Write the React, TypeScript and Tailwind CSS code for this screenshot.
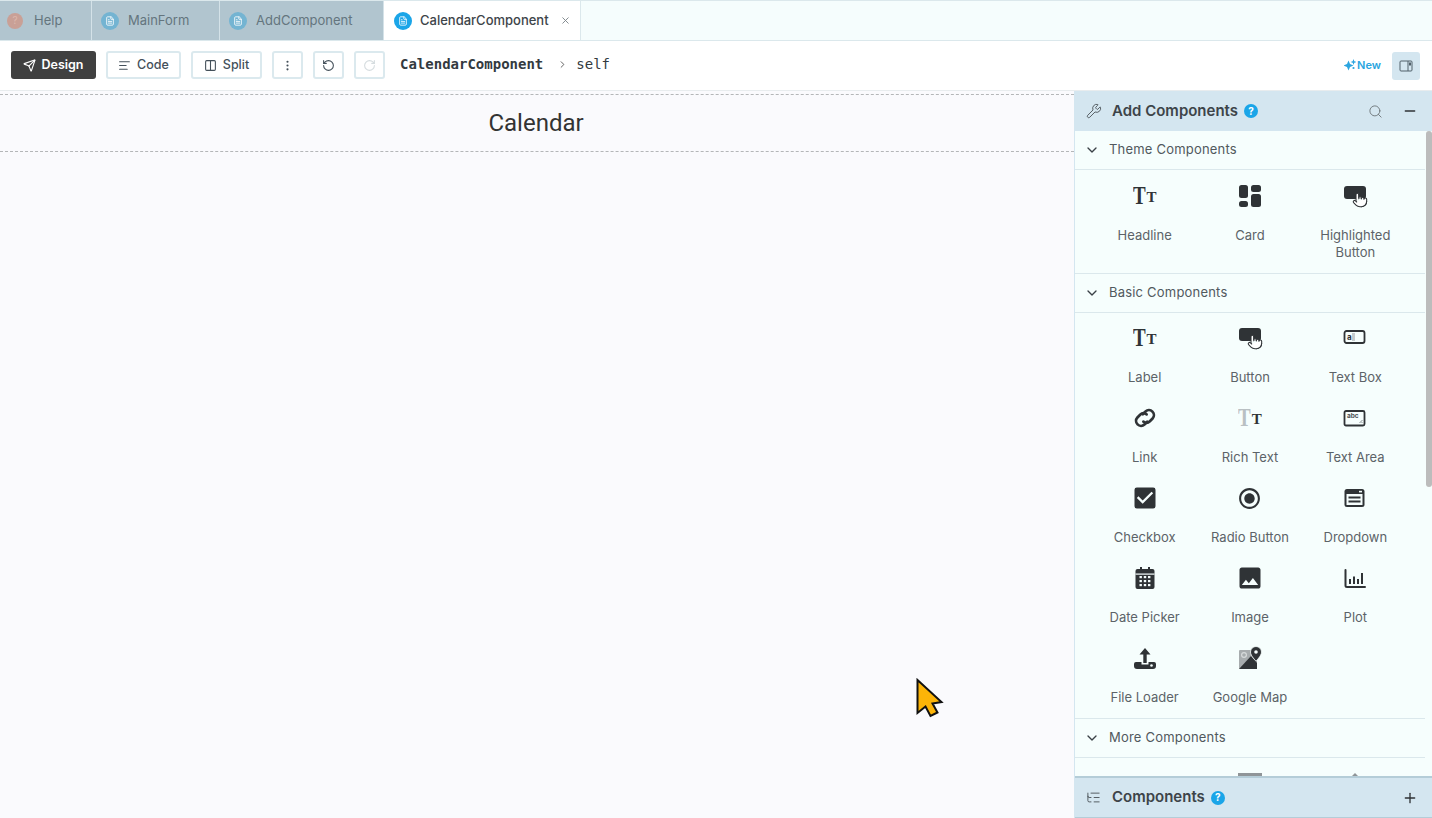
import React from 'react';
import { ChevronDown, ChevronRight, Search, Minus, Plus, Wrench, Send, AlignLeft, Columns2, EllipsisVertical, RotateCcw, RotateCw, X, ListTree, FileText, Pointer } from 'lucide-react';
import { MdCheckBox, MdRadioButtonChecked, MdImage } from 'react-icons/md';

const ui = { fontFamily: 'Inter, "Liberation Sans", sans-serif' };

function Help() {
  return (
    <span className="flex h-[14px] w-[14px] items-center justify-center rounded-full bg-[#1aa5e8] text-[10px] font-bold text-white">?</span>
  );
}

function TabIcon({ color }: { color: string }) {
  return (
    <span className={`flex h-[18px] w-[18px] shrink-0 items-center justify-center rounded-full ${color}`}>
      <FileText size={10} className="text-white" />
    </span>
  );
}

function Tab({ label, width }: { label: string; width: string }) {
  return (
    <div className={`flex h-full items-center gap-[9px] border-r border-[#d4e2e8] pl-[9px] ${width}`}>
      <TabIcon color="bg-[#74b4d2]" />
      <span className="text-[13px] text-[#64757e]">{label}</span>
    </div>
  );
}

function ToolButton({ children, width }: { children: React.ReactNode; width: string }) {
  return (
    <button className={`flex h-[28px] items-center justify-center gap-[6px] rounded-[3px] border-2 border-[#dbe9ee] bg-white text-[12.5px] font-medium text-[#44505a] ${width}`}>
      {children}
    </button>
  );
}

function TtIcon({ faded }: { faded?: boolean }) {
  return (
    <span className="flex h-[24px] items-end justify-center text-[#2f3336]" style={{ fontFamily: '"Liberation Serif", serif' }}>
      <span className={`-mx-[2px] inline-block scale-x-[0.76] text-[25px] leading-[24px] font-bold ${faded ? 'text-[#b9c0c3]' : ''}`}>T</span>
      <span className="mb-[3px] ml-[1px] text-[15px] leading-[15px] font-bold">T</span>
    </span>
  );
}

function CardIcon() {
  return (
    <svg width="24" height="24" viewBox="0 0 24 24" fill="#2f3336">
      <rect x="1" y="1" width="9" height="13" rx="2.5" />
      <rect x="13" y="1" width="10" height="7" rx="2.5" />
      <rect x="1" y="17" width="9" height="6" rx="2.5" />
      <rect x="13" y="10" width="10" height="13" rx="2.5" />
    </svg>
  );
}

function ButtonIcon() {
  return (
    <span className="relative block h-[24px] w-[24px]">
      <span className="absolute top-[2px] left-[1px] h-[13px] w-[22px] rounded-[3px] bg-[#2f3336]" />
      <Pointer size={16} strokeWidth={1.6} className="absolute top-[8px] left-[9px] fill-white text-[#2f3336]" />
    </span>
  );
}

function TextBoxIcon() {
  return (
    <svg width="24" height="24" viewBox="0 0 24 24" fill="none">
      <rect x="1.5" y="5" width="20" height="12" rx="2" stroke="#2f3336" strokeWidth="1.8" />
      <rect x="9" y="7" width="3" height="8" fill="#c5cbce" />
      <text x="4" y="14" fontSize="8" fontWeight="700" fill="#2f3336" fontFamily="Inter, sans-serif">a</text>
    </svg>
  );
}

function LinkIcon() {
  return (
    <svg className="shrink-0" width="26" height="26" viewBox="0 0 24 24" fill="none" stroke="#2f3336" strokeWidth="2.5" strokeLinecap="round">
      <path d="M10 8.5 L12.5 6 a4.6 4.6 0 0 1 6.5 6.5 L16.5 15 a4.6 4.6 0 0 1 -6 .4" />
      <path d="M14 15.5 L11.5 18 a4.6 4.6 0 0 1 -6.5 -6.5 L7.5 9 a4.6 4.6 0 0 1 6 -.4" />
    </svg>
  );
}

function TextAreaIcon() {
  return (
    <svg width="24" height="24" viewBox="0 0 24 24" fill="none">
      <rect x="1.5" y="5" width="20" height="14.5" rx="1.5" stroke="#2f3336" strokeWidth="1.8" />
      <text x="4" y="12" fontSize="6.5" fontWeight="700" fill="#4b5053" fontFamily="Inter, sans-serif">abc</text>
      <path d="M19.5 14 L16.5 17 M19.5 16 L18.5 17" stroke="#6a7073" strokeWidth="0.8" />
    </svg>
  );
}

function DropdownIcon() {
  return (
    <svg width="24" height="24" viewBox="0 0 24 24">
      <rect x="1.5" y="3" width="20" height="18" rx="2.5" fill="#2f3336" />
      <rect x="3.5" y="8" width="16" height="11" fill="#f6fefd" />
      <rect x="16" y="4.8" width="3" height="1.6" fill="#f6fefd" />
      <rect x="5.5" y="10.5" width="12" height="2" fill="#2f3336" />
      <rect x="5.5" y="14.5" width="12" height="2" fill="#2f3336" />
    </svg>
  );
}

function CalendarIcon() {
  return (
    <svg width="24" height="24" viewBox="0 0 24 24" fill="#2f3336">
      <rect x="7" y="1" width="2" height="4" />
      <rect x="15" y="1" width="2" height="4" />
      <rect x="2.5" y="3" width="19" height="20" rx="2" />
      <rect x="2.5" y="7.5" width="19" height="1.2" fill="#f6fefd" />
      {[6.5, 10.8, 15].map((x) =>
        [11, 15, 19].map((y) => <rect key={`${x}-${y}`} x={x} y={y - 1} width="2.4" height="2.2" fill="#f6fefd" />)
      )}
    </svg>
  );
}

function PlotIcon() {
  return (
    <svg width="24" height="24" viewBox="0 0 24 24" fill="none" stroke="#2f3336">
      <path d="M2.5 4 V19.5 a1.5 1.5 0 0 0 1.5 1.5 H22" strokeWidth="2" strokeLinecap="round" />
      <path d="M7 13v5M11 10.5v7.5M15 13v5M19 7v11" strokeWidth="2" />
    </svg>
  );
}

function LoaderIcon() {
  return (
    <svg width="24" height="24" viewBox="0 0 24 24">
      <path d="M12 2 L17.5 8.5 H13.7 V17 H10.3 V8.5 H6.5 Z" fill="#2f3336" />
      <path d="M3 16 H8.5 V18.5 H15.5 V16 H21 a2 2 0 0 1 2 2 V20 a3 3 0 0 1 -3 3 H4 a3 3 0 0 1 -3 -3 V18 a2 2 0 0 1 2 -2 Z" fill="#2f3336" />
      <circle cx="18.5" cy="19.5" r="1.3" fill="#f6fefd" />
    </svg>
  );
}

function MapIcon() {
  return (
    <svg width="24" height="24" viewBox="0 0 24 24">
      <rect x="1" y="4" width="18" height="19" rx="1" fill="#a7acae" />
      <path d="M1 23 L13 10 L19 17 V23 Z" fill="#2f3336" />
      <circle cx="6" cy="9" r="2.4" fill="none" stroke="#d6dadb" strokeWidth="1.2" />
      <path d="M18 0.5 a5.5 5.5 0 0 1 5.5 5.5 C23.5 10 18 15 18 15 S12.5 10 12.5 6 A5.5 5.5 0 0 1 18 0.5 Z" fill="#2f3336" stroke="#f6fefd" strokeWidth="0.8" />
      <circle cx="18" cy="6" r="1.8" fill="#f6fefd" />
    </svg>
  );
}

function Item({ icon, label }: { icon: React.ReactNode; label: string }) {
  return (
    <div className="flex h-[80px] flex-col items-center pt-[14px]">
      <div className="flex h-[24px] w-[24px] items-center justify-center">{icon}</div>
      <div className="mt-[19px] text-center text-[13px] leading-[17px] text-[#5c6368]">{label}</div>
    </div>
  );
}

function SectionHead({ label }: { label: string }) {
  return (
    <div className="flex h-[39px] items-center border-b border-[#dbe8ec] pl-[9px]">
      <ChevronDown size={16} className="text-[#3a4146]" />
      <span className="ml-[9px] text-[13px] tracking-[0.2px] text-[#51595e]">{label}</span>
    </div>
  );
}

export default function App() {
  return (
    <div className="relative flex h-[818px] w-[1432px] flex-col overflow-hidden bg-white" style={ui}>
      {/* tabs */}
      <div className="flex h-[41px] shrink-0 border-t border-b border-[#dbe8ec] bg-[#f5fdfd]">
        <div className="flex bg-[#b1c5cf]">
          <div className="flex h-full w-[92px] items-center gap-[11px] border-r border-[#d4e2e8] pl-[7px]">
            <span className="flex h-[16px] w-[16px] items-center justify-center rounded-full bg-[#c9a096] text-[10px] text-[#dcb8ae]">?</span>
            <span className="text-[13px] text-[#64757e]">Help</span>
          </div>
          <Tab label="MainForm" width="w-[128px]" />
          <Tab label="AddComponent" width="w-[164px]" />
        </div>
        <div className="flex w-[197px] items-center border-r border-[#dbe8ec] bg-white pl-[10px]">
          <TabIcon color="bg-[#1aa5e8]" />
          <span className="ml-[8px] text-[13px] font-medium text-[#3d4449]">CalendarComponent</span>
          <X size={11} className="ml-[11px] text-[#7b8388]" />
        </div>
      </div>

      {/* toolbar */}
      <div className="flex h-[50px] shrink-0 items-center border-b border-[#e8ecee] pb-[1px] pl-[11px]">
        <button className="flex h-[28px] w-[85px] items-center justify-center gap-[5px] rounded-[3px] bg-[#404040] text-[12.5px] font-semibold text-white">
          <Send size={13} /> Design
        </button>
        <div className="ml-[10px] flex gap-[10px]">
          <ToolButton width="w-[75px]"><AlignLeft size={13} />Code</ToolButton>
          <ToolButton width="w-[71px]"><Columns2 size={13} />Split</ToolButton>
          <ToolButton width="w-[31px]"><EllipsisVertical size={13} /></ToolButton>
          <ToolButton width="w-[31px]"><RotateCcw size={13} /></ToolButton>
          <ToolButton width="w-[31px]"><RotateCw size={13} className="text-[#d5dcdf]" /></ToolButton>
        </div>
        <div className="-mt-[1px] ml-[15px] flex items-center text-[14px] text-[#333a3f]" style={{ fontFamily: '"DejaVu Sans Mono", monospace' }}>
          <span className="font-bold">CalendarComponent</span>
          <ChevronRight size={11} className="mr-[8px] ml-[14px] text-[#555]" />
          <span>self</span>
        </div>
        <div className="ml-auto flex items-center text-[11px] font-semibold text-[#2ba5e0]">
          <svg className="mr-[1px]" width="12" height="12" viewBox="0 0 12 12" fill="#2ba5e0">
            <path d="M4.5 1.5 L6 5 L9.5 6.5 L6 8 L4.5 11.5 L3 8 L-0.5 6.5 L3 5 Z" />
            <path d="M9.5 0 L10.3 2.2 L12.5 3 L10.3 3.8 L9.5 6 L8.7 3.8 L6.5 3 L8.7 2.2 Z" />
            <circle cx="9.5" cy="9" r="1.1" />
          </svg>
          New
        </div>
        <div className="mt-[1px] mr-[12px] ml-[11px] flex h-[28px] w-[28px] items-center justify-center rounded-[3px] bg-[#d4e6f0]">
          <svg width="14" height="14" viewBox="0 0 14 14" fill="none" stroke="#51606a" strokeWidth="1">
            <rect x="1" y="2" width="12" height="10" rx="1" />
            <path d="M9 2v10" />
            <rect x="10" y="3.5" width="2" height="3" fill="#51606a" stroke="none" />
          </svg>
        </div>
      </div>

      {/* body */}
      <div className="flex min-h-0 flex-1">
        <div className="flex-1 bg-[#fafafd] pt-[3px]">
          <div className="flex h-[58px] items-center justify-center border-y border-dashed border-[#b4b6b8] pr-[2px] pb-[1px] text-[24px] text-[#333]" style={{ fontFamily: 'Roboto, sans-serif' }}>
            Calendar
          </div>
        </div>

        <div className="flex w-[358px] shrink-0 flex-col border-l border-[#d4e6f0] bg-[#f6fefd]">
          <div className="flex h-[40px] shrink-0 items-center bg-[#d4e6f0] pl-[11px]">
            <Wrench size={16} strokeWidth={1.3} className="text-[#454c51]" />
            <span className="ml-[10px] text-[15px] font-semibold text-[#3d4449]">Add Components</span>
            <span className="ml-[6px]"><Help /></span>
            <Search size={15} strokeWidth={1.5} className="mr-[19px] ml-auto text-[#6f777c]" />
            <Minus size={16} strokeWidth={2.2} className="mr-[14px] text-[#2f3336]" />
          </div>
          <div className="relative min-h-0 flex-1 overflow-hidden pr-[7px]">
            <SectionHead label="Theme Components" />
            <div className="grid h-[104px] grid-cols-3 border-b border-[#dbe8ec] px-[17px]">
              <Item icon={<TtIcon />} label="Headline" />
              <Item icon={<CardIcon />} label="Card" />
              <Item icon={<ButtonIcon />} label="Highlighted Button" />
            </div>
            <SectionHead label="Basic Components" />
            <div className="border-b border-[#dbe8ec] px-[17px] pb-[6px]">
              <div className="-mt-[1px] grid grid-cols-3">
                <Item icon={<TtIcon />} label="Label" />
                <Item icon={<ButtonIcon />} label="Button" />
                <Item icon={<TextBoxIcon />} label="Text Box" />
                <Item icon={<LinkIcon />} label="Link" />
                <Item icon={<TtIcon faded />} label="Rich Text" />
                <Item icon={<TextAreaIcon />} label="Text Area" />
                <Item icon={<MdCheckBox size={28} className="shrink-0 text-[#2f3336]" />} label="Checkbox" />
                <Item icon={<MdRadioButtonChecked size={25} className="shrink-0 text-[#2f3336]" />} label="Radio Button" />
                <Item icon={<DropdownIcon />} label="Dropdown" />
                <Item icon={<CalendarIcon />} label="Date Picker" />
                <Item icon={<MdImage size={28} className="shrink-0 text-[#2f3336]" />} label="Image" />
                <Item icon={<PlotIcon />} label="Plot" />
                <Item icon={<LoaderIcon />} label="File Loader" />
                <Item icon={<MapIcon />} label="Google Map" />
              </div>
            </div>
            <SectionHead label="More Components" />
            <div className="grid grid-cols-3 px-[17px] pt-[15px]">
              <span />
              <span className="mx-auto h-[4px] w-[24px] bg-[#8f9598]" />
              <span className="mx-auto h-0 w-0 border-x-[4px] border-b-[4px] border-x-transparent border-b-[#8f9598]" />
            </div>
            <div className="absolute top-0 right-0 h-[356px] w-[6px] rounded-sm bg-[#bcbcbc]" />
          </div>
          <div className="flex h-[42px] shrink-0 items-center border-t-2 border-b border-t-[#b4cdd8] border-b-[#b4cdd8] bg-[#d4e6f0] pl-[11px]">
            <ListTree size={15} strokeWidth={1.4} className="text-[#454c51]" />
            <span className="ml-[11px] text-[15px] font-semibold text-[#3d4449]">Components</span>
            <span className="ml-[6px]"><Help /></span>
            <Plus size={16} strokeWidth={2} className="mr-[14px] ml-auto text-[#2f3336]" />
          </div>
        </div>
      </div>

      {/* cursor in the recording */}
      <svg className="absolute top-[678px] left-[915px]" width="30" height="40" viewBox="0 0 30 40">
        <path d="M2.5 2 L26.5 24 L17.5 25.5 L22.5 34.5 L15.5 38 L10.5 28.5 L2.5 35 Z" fill="#fcb408" stroke="#111" strokeWidth="2" strokeLinejoin="miter" />
      </svg>
    </div>
  );
}
